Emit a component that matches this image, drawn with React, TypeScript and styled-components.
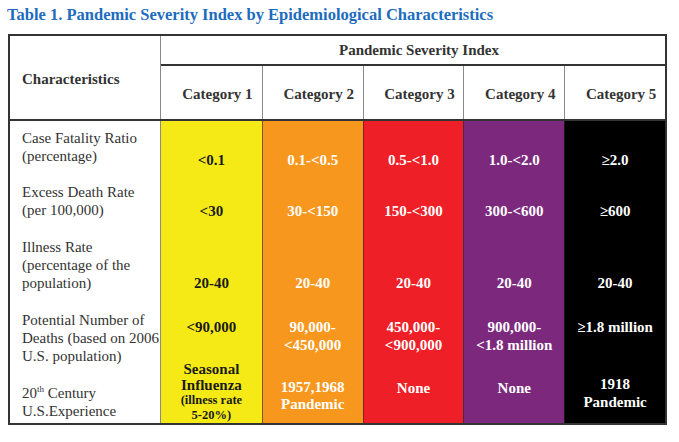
import * as React from 'react';
import styled, {createGlobalStyle} from 'styled-components';

const serif = `'Liberation Serif', 'Times New Roman', 'DejaVu Serif', serif`;

const GlobalStyle = createGlobalStyle`
    html, body {
        margin: 0;
        padding: 0;
        background: #ffffff;
    }
    body {
        font-family: ${serif};
        color: #222;
    }
`;

const colors = {
    border: '#333333',
    line: '#8a8a8a',
    title: '#1d6cbd',
};

const categories = [
    {name: 'Category 1', bg: '#f5ea16', fg: '#1a1a1a'},
    {name: 'Category 2', bg: '#f7971e', fg: '#ffffff'},
    {name: 'Category 3', bg: '#ee1f26', fg: '#ffffff'},
    {name: 'Category 4', bg: '#7c297d', fg: '#ffffff'},
    {name: 'Category 5', bg: '#000000', fg: '#ffffff'},
];

type Cell = {lines: React.ReactNode[]; top?: number; lh?: number; small?: number[]};

type RowData = {
    label: React.ReactNode[];
    height: number;
    labelTop: number;
    valueTop: number;
    values: Cell[];
};

const rows: RowData[] = [
    {
        label: ['Case Fatality Ratio', '(percentage)'],
        height: 53,
        labelTop: 8,
        valueTop: 30,
        values: [{lines: ['<0.1']}, {lines: ['0.1-<0.5']}, {lines: ['0.5-<1.0']}, {lines: ['1.0-<2.0']}, {lines: ['≥2.0']}],
    },
    {
        label: ['Excess Death Rate', '(per 100,000)'],
        height: 54,
        labelTop: 9,
        valueTop: 28,
        values: [{lines: ['<30']}, {lines: ['30-<150']}, {lines: ['150-<300']}, {lines: ['300-<600']}, {lines: ['≥600']}],
    },
    {
        label: ['Illness Rate', '(percentage of the', 'population)'],
        height: 72,
        labelTop: 10,
        valueTop: 46,
        values: [{lines: ['20-40']}, {lines: ['20-40']}, {lines: ['20-40']}, {lines: ['20-40']}, {lines: ['20-40']}],
    },
    {
        label: ['Potential Number of', 'Deaths (based on 2006', 'U.S. population)'],
        height: 62,
        labelTop: 11,
        valueTop: 18,
        values: [
            {lines: ['<90,000']},
            {lines: ['90,000-', '<450,000']},
            {lines: ['450,000-', '<900,000']},
            {lines: ['900,000-', '<1.8 million']},
            {lines: ['≥1.8 million']},
        ],
    },
    {
        label: [
            <>
                20<sup>th</sup> Century
            </>,
            'U.S.Experience',
        ],
        height: 61,
        labelTop: 22,
        valueTop: 17,
        values: [
            {lines: ['Seasonal', 'Influenza', '(illness rate', '5-20%)'], top: 0, lh: 15.5, small: [2, 3]},
            {lines: ['1957,1968', 'Pandemic'], lh: 17},
            {lines: ['None']},
            {lines: ['None']},
            {lines: ['1918', 'Pandemic'], top: 13},
        ],
    },
];

const Page = styled.div`
    padding: 5px 0 0 7px;
    font-family: ${serif};
`;

const Title = styled.h1`
    margin: 0 0 9px 0;
    font-family: ${serif};
    font-size: 16.5px;
    line-height: 20px;
    font-weight: bold;
    color: ${colors.title};
`;

const Table = styled.div`
    width: 659px;
    margin-left: 1px;
    box-sizing: border-box;
    border: 2px solid ${colors.border};
    background: #fff;
`;

const Grid = styled.div`
    display: grid;
    grid-template-columns: 151px repeat(5, 1fr);
`;

const Header = styled(Grid)`
    grid-template-rows: 30px 53px;
    border-bottom: 2px solid ${colors.border};
`;

const HeadCell = styled.div`
    display: flex;
    align-items: center;
    justify-content: center;
    font-size: 15px;
    font-weight: bold;
    color: #333;
    padding-left: 12px;
`;

const CharCell = styled(HeadCell)`
    grid-row: 1 / span 2;
    justify-content: flex-start;
    padding: 3px 0 0 12px;
    border-right: 1px solid ${colors.line};
`;

const IndexCell = styled(HeadCell)`
    grid-column: 2 / span 5;
    border-bottom: 2px solid ${colors.border};
`;

const CategoryCell = styled(HeadCell)`
    padding-top: 3px;

    & + & {
        border-left: 1px solid ${colors.line};
    }
`;

const Body = styled(Grid)``;

const LabelCell = styled.div<{$h: number; $top: number}>`
    height: ${(p) => p.$h}px;
    box-sizing: border-box;
    padding: ${(p) => p.$top}px 0 0 12px;
    font-size: 15px;
    line-height: 18px;
    color: #333;
    white-space: nowrap;
    border-right: 1px solid ${colors.line};

    sup {
        font-size: 9px;
        line-height: 0;
    }
`;

const ValueCell = styled.div<{$bg: string; $fg: string; $top: number; $lh: number; $first: boolean}>`
    display: flex;
    flex-direction: column;
    align-items: center;
    box-sizing: border-box;
    padding-top: ${(p) => p.$top}px;
    background: ${(p) => p.$bg};
    color: ${(p) => p.$fg};
    font-size: 15px;
    font-weight: bold;
    line-height: ${(p) => p.$lh}px;
    white-space: nowrap;
    border-left: ${(p) => (p.$first ? 'none' : '1px solid rgba(40, 40, 40, 0.6)')};
`;

const Line = styled.span<{$small?: boolean}>`
    font-size: ${(p) => (p.$small ? '12.5px' : 'inherit')};
    line-height: ${(p) => (p.$small ? '15px' : 'inherit')};
`;

export default function App() {
    return (
        <Page>
            <GlobalStyle />
            <Title>Table 1. Pandemic Severity Index by Epidemiological Characteristics</Title>
            <Table>
                <Header>
                    <CharCell>Characteristics</CharCell>
                    <IndexCell>Pandemic Severity Index</IndexCell>
                    {categories.map((c) => (
                        <CategoryCell key={c.name}>{c.name}</CategoryCell>
                    ))}
                </Header>
                <Body>
                    {rows.map((row, r) => (
                        <React.Fragment key={r}>
                            <LabelCell $h={row.height} $top={row.labelTop}>
                                {row.label.map((l, i) => (
                                    <div key={i}>{l}</div>
                                ))}
                            </LabelCell>
                            {row.values.map((v, i) => (
                                <ValueCell
                                    key={i}
                                    $bg={categories[i].bg}
                                    $fg={categories[i].fg}
                                    $top={v.top ?? row.valueTop}
                                    $lh={v.lh ?? 18}
                                    $first={i === 0}
                                >
                                    {v.lines.map((l, j) => (
                                        <Line key={j} $small={v.small?.includes(j)}>
                                            {l}
                                        </Line>
                                    ))}
                                </ValueCell>
                            ))}
                        </React.Fragment>
                    ))}
                </Body>
            </Table>
        </Page>
    );
}
